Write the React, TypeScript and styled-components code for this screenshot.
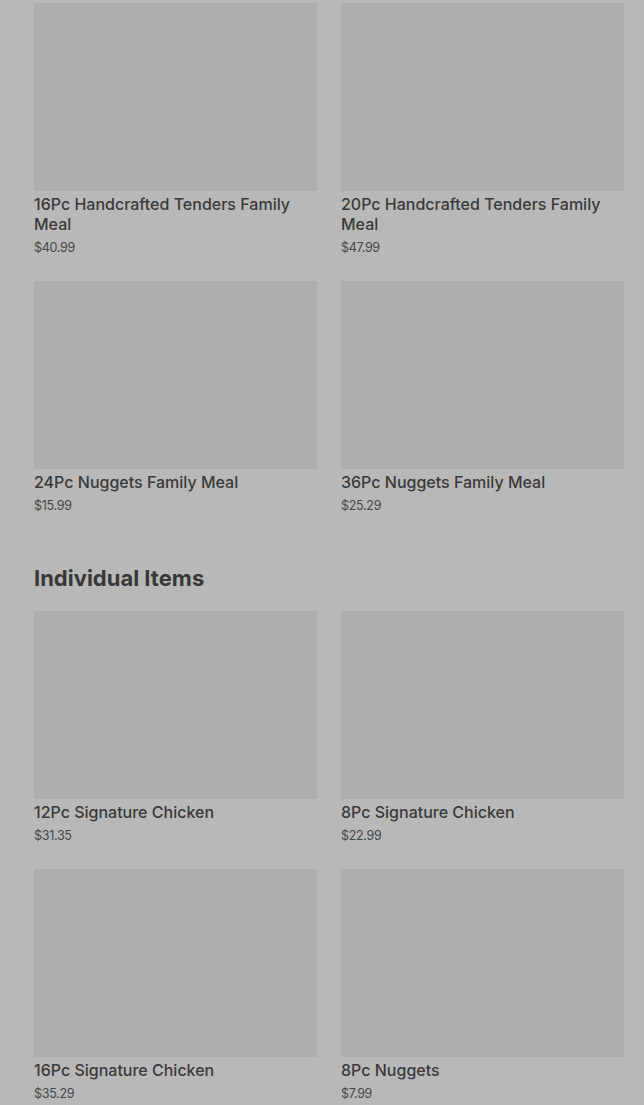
import styled, { createGlobalStyle } from 'styled-components';

interface IItem {
  name: string;
  price: string;
}

const familyMeals: IItem[] = [
  { name: '16Pc Handcrafted Tenders Family Meal', price: '$40.99' },
  { name: '20Pc Handcrafted Tenders Family Meal', price: '$47.99' },
  { name: '24Pc Nuggets Family Meal', price: '$15.99' },
  { name: '36Pc Nuggets Family Meal', price: '$25.29' },
];

const individualItems: IItem[] = [
  { name: '12Pc Signature Chicken', price: '$31.35' },
  { name: '8Pc Signature Chicken', price: '$22.99' },
  { name: '16Pc Signature Chicken', price: '$35.29' },
  { name: '8Pc Nuggets', price: '$7.99' },
];

function MenuItem({ item }: { item: IItem }) {
  return (
    <Card>
      <Thumb />
      <Title>{item.name}</Title>
      <Price>{item.price}</Price>
    </Card>
  );
}

export default function App() {
  return (
    <>
      <GlobalStyle />
      <Page>
        <Grid>
          {familyMeals.map((item) => (
            <MenuItem key={item.name} item={item} />
          ))}
        </Grid>
        <SectionTitle>Individual Items</SectionTitle>
        <Grid>
          {individualItems.map((item) => (
            <MenuItem key={item.name} item={item} />
          ))}
        </Grid>
      </Page>
    </>
  );
}

const GlobalStyle = createGlobalStyle`
  html, body {
    margin: 0;
    padding: 0;
    background: #b8b8b8;
  }
  body {
    font-family: Inter, "Noto Sans", sans-serif;
    color: #3b3b3b;
  }
`;

const Page = styled.div`
  background: #b8b8b8;
  min-height: 1105px;
  overflow: hidden;
  padding: 3px 20px 0 34px;
`;

const Grid = styled.div`
  column-gap: 24px;
  display: grid;
  grid-template-columns: 283px 283px;
  row-gap: 24px;
`;

const Card = styled.div`
  display: flex;
  flex-direction: column;
`;

const Thumb = styled.div`
  background: #adadad;
  height: 188px;
  width: 100%;
`;

const Title = styled.div`
  color: #3a3a3a;
  font-size: 16px;
  font-weight: 500;
  letter-spacing: 0;
  line-height: 20px;
  margin-top: 3px;
`;

const Price = styled.div`
  color: #474747;
  font-size: 12.5px;
  letter-spacing: -0.3px;
  line-height: 18px;
  margin-top: 5px;
`;

const SectionTitle = styled.h2`
  color: #383838;
  font-size: 22px;
  font-weight: 700;
  letter-spacing: 0;
  line-height: 28px;
  margin: 49px 0 19px;
`;
